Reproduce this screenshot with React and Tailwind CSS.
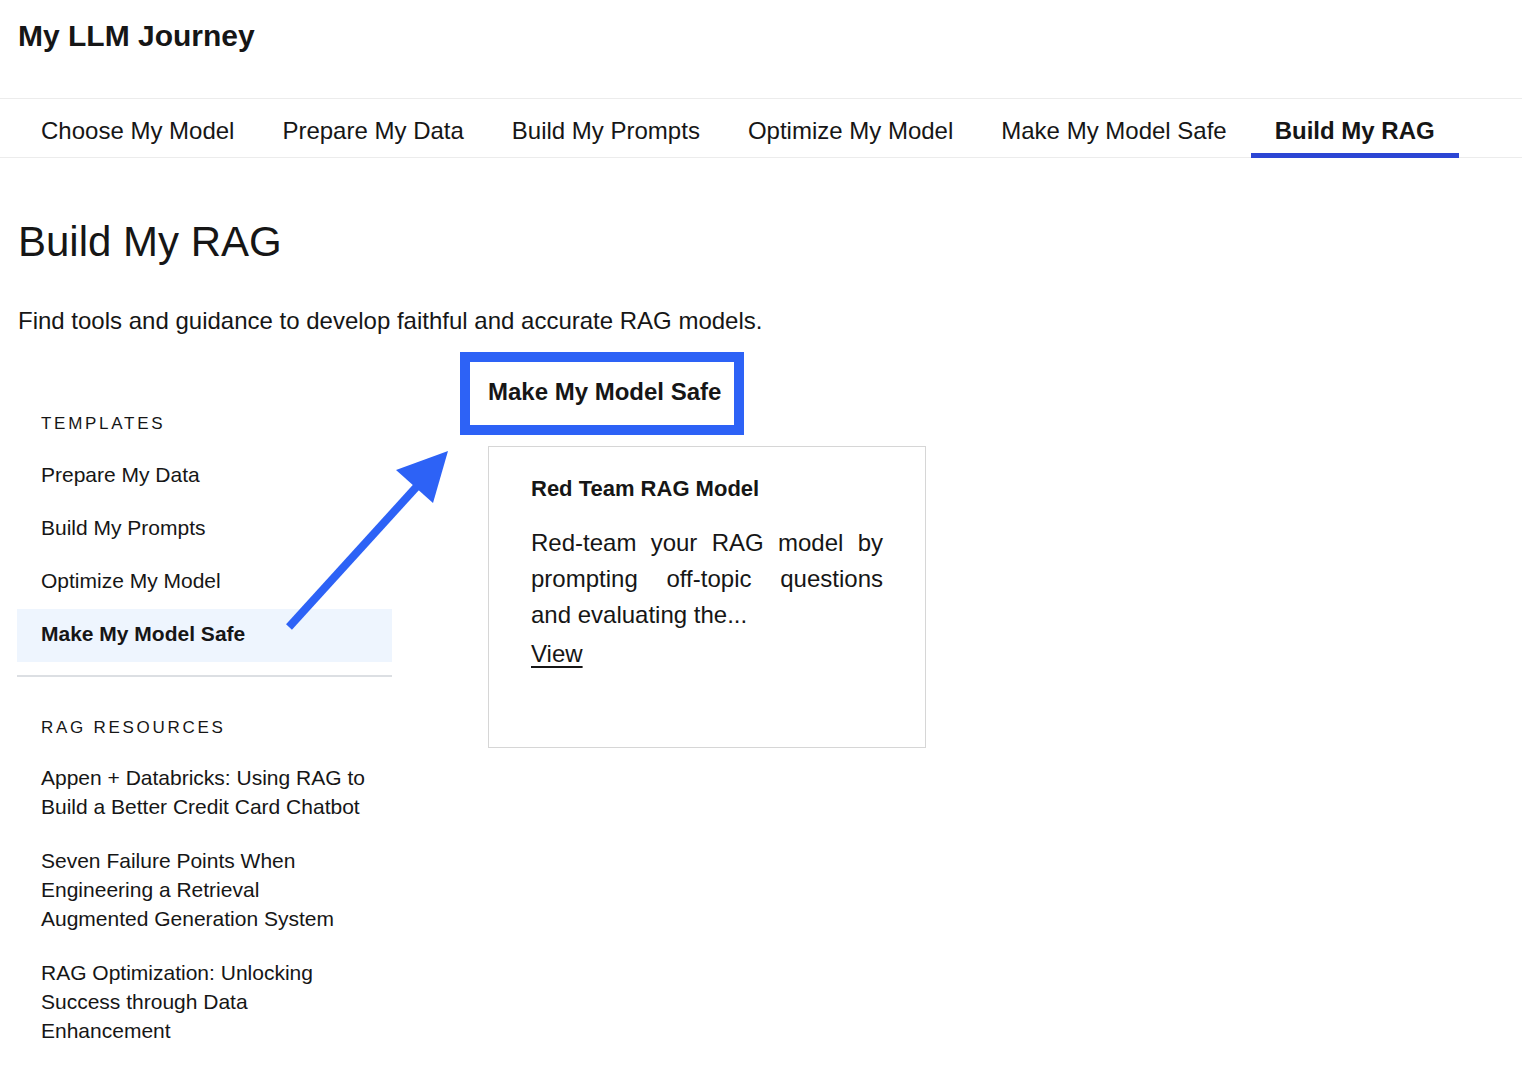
import React from 'react';

const tabs = [
    'Choose My Model',
    'Prepare My Data',
    'Build My Prompts',
    'Optimize My Model',
    'Make My Model Safe',
    'Build My RAG',
];

const templates = ['Prepare My Data', 'Build My Prompts', 'Optimize My Model', 'Make My Model Safe'];

const resources = [
    'Appen + Databricks: Using RAG to Build a Better Credit Card Chatbot',
    'Seven Failure Points When Engineering a Retrieval Augmented Generation System',
    'RAG Optimization: Unlocking Success through Data Enhancement',
];

const App = () => {
    const active = 'Build My RAG';

    return (
        <div className="relative min-h-[1084px] bg-white text-[#161616] font-['Liberation_Sans',Arial,sans-serif]">
            {/* Header */}
            <div className="h-[98px] px-[18px] pt-[18px]">
                <h2 className="text-[30px] leading-[36px] font-bold">My LLM Journey</h2>
            </div>

            {/* Tabs */}
            <nav className="border-y border-[#ececec] pl-[17px]">
                <ul className="flex -mb-px">
                    {tabs.map((tab) => (
                        <li
                            key={tab}
                            className={`h-[59px] px-6 flex items-center text-[24px] border-b-[5px] ${
                                tab === active ? 'font-bold border-[#2c46d4]' : 'border-transparent'
                            }`}
                        >
                            <span className="pt-[9px]">{tab}</span>
                        </li>
                    ))}
                </ul>
            </nav>

            <div className="px-[17px]">
                <h1 className="mt-[59px] text-[42px] leading-[50px] pl-px">Build My RAG</h1>
                <p className="mt-[38px] text-[24px] leading-[32px] pl-px">
                    Find tools and guidance to develop faithful and accurate RAG models.
                </p>

                <div className="flex">
                    {/* Sidebar */}
                    <aside className="w-[375px] shrink-0 pt-[60px]">
                        <div className="h-[53px] flex items-center px-6 text-[17px] tracking-[0.16em] uppercase">
                            Templates
                        </div>
                        {templates.map((item) => (
                            <div
                                key={item}
                                className={`h-[53px] flex items-center px-6 pb-[3px] text-[21px] ${
                                    item === 'Make My Model Safe' ? 'bg-[#eef5fe] font-bold' : ''
                                }`}
                            >
                                {item}
                            </div>
                        ))}
                        <div className="mt-[13px] h-[2px] bg-[#dcdfe3]" />
                        <div className="mt-[24px] h-[53px] flex items-center px-6 text-[17px] tracking-[0.16em] uppercase">
                            RAG Resources
                        </div>
                        <div className="mt-[9px] px-6 flex flex-col gap-[25px]">
                            {resources.map((r) => (
                                <a key={r} className="text-[21px] leading-[29px]">
                                    {r}
                                </a>
                            ))}
                        </div>
                    </aside>

                    {/* Content */}
                    <section className="ml-[96px] pt-[15px]">
                        <div className="-ml-[28px] inline-block border-[10px] border-[#2d62f6] pl-[18px] pr-[13px] pt-[13px] pb-[16px]">
                            <h3 className="text-[24px] leading-[34px] font-bold">Make My Model Safe</h3>
                        </div>
                        <div className="mt-[11px] w-[438px] h-[302px] border border-[#d6d6d6] px-[42px] pt-[29px]">
                            <h4 className="text-[22px] leading-[26px] font-bold">Red Team RAG Model</h4>
                            <p className="mt-[23px] text-[24px] leading-[36px] text-justify">
                                Red-team your RAG model by prompting off-topic questions and evaluating the...
                            </p>
                            <a className="block mt-[3px] text-[24px] leading-[36px] underline underline-offset-[4px]">View</a>
                        </div>
                    </section>
                </div>
            </div>

            {/* Annotation arrow */}
            <svg className="absolute left-0 top-0 pointer-events-none" width="1522" height="1084">
                <line x1="289" y1="627" x2="420" y2="483" stroke="#2d62f6" strokeWidth="8" />
                <polygon points="396,470 448,451 433,503" fill="#2d62f6" />
            </svg>
        </div>
    );
};

export default App;
